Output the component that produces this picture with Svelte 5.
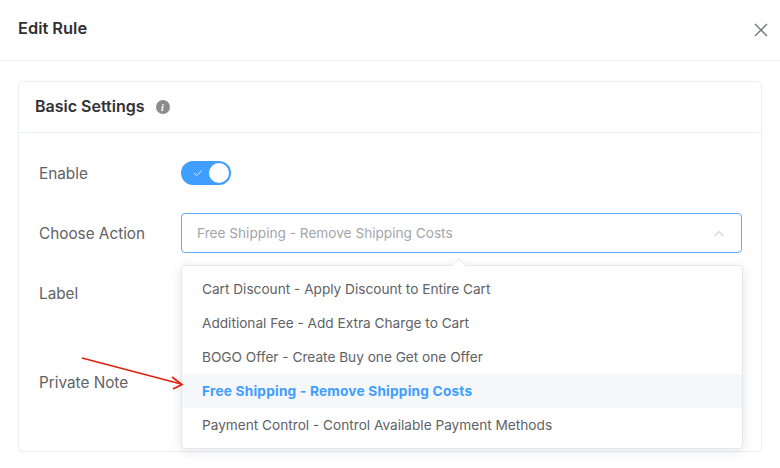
<script>
  const actions = [
    'Cart Discount - Apply Discount to Entire Cart',
    'Additional Fee - Add Extra Charge to Cart',
    'BOGO Offer - Create Buy one Get one Offer',
    'Free Shipping - Remove Shipping Costs',
    'Payment Control - Control Available Payment Methods'
  ];
  const selected = actions[3];
</script>

<div class="dialog">
  <header class="dialog-head">
    <h2>Edit Rule</h2>
    <svg class="close" width="16" height="16" viewBox="0 0 16 16" aria-label="Close">
      <path d="M2 2l12 12M14 2L2 14" stroke="#73767c" stroke-width="1.4" fill="none" />
    </svg>
  </header>

  <section class="card">
    <div class="card-head">
      <h3>Basic Settings</h3>
      <span class="info">i</span>
    </div>

    <div class="card-body">
      <div class="row">
        <span class="label">Enable</span>
        <span class="switch">
          <svg width="10" height="8" viewBox="0 0 10 8">
            <path d="M1 4.2l2.6 2.4L9 1.4" stroke="#d9ecff" stroke-width="1" fill="none" />
          </svg>
          <span class="knob"></span>
        </span>
      </div>

      <div class="row">
        <span class="label">Choose Action</span>
        <div class="select">
          <span>{selected}</span>
          <svg width="12" height="7" viewBox="0 0 12 7">
            <path d="M1.5 6L6 1.5 10.5 6" stroke="#d3d5da" stroke-width="1.2" fill="none" />
          </svg>
        </div>
      </div>

      <div class="row">
        <span class="label">Label</span>
        <div class="input"></div>
      </div>

      <div class="row note">
        <span class="label">Private Note</span>
        <div class="input textarea"></div>
      </div>

      <div class="dropdown">
        <span class="caret"></span>
        <ul>
          {#each actions as action}
            <li class:active={action === selected}>{action}</li>
          {/each}
        </ul>
      </div>
    </div>
  </section>

  <svg class="arrow" width="110" height="40" viewBox="0 0 110 40">
    <path d="M1 2L100 28" stroke="#e0220f" stroke-width="1.7" fill="none" />
    <path d="M91 21L101 28.5 92 33" stroke="#e0220f" stroke-width="1.7" fill="none" />
  </svg>
</div>

<style>
  :global(body) {
    margin: 0;
    background: #fff;
  }

  .dialog {
    position: relative;
    width: 780px;
    height: 468px;
    overflow: hidden;
    font-family: Inter, "Liberation Sans", sans-serif;
    color: #606266;
  }

  .dialog-head {
    display: flex;
    align-items: center;
    justify-content: space-between;
    height: 56px;
    padding: 0 11px 4px 18px;
    border-bottom: 1px solid #ebedf2;
  }

  h2 {
    margin: 0;
    font-size: 16.4px;
    font-weight: 600;
    color: #303133;
  }

  .close {
    margin-top: 4px;
  }

  .card {
    margin: 20px 18px 0;
    height: 371px;
    box-sizing: border-box;
    border: 1px solid #ebeef5;
    border-radius: 4px;
  }

  .card-head {
    display: flex;
    align-items: center;
    gap: 11px;
    height: 48px;
    padding: 0 16px 2px;
    border-bottom: 1px solid #ebedf5;
  }

  h3 {
    margin: 0;
    font-size: 16px;
    font-weight: 600;
    color: #303133;
  }

  .info {
    display: flex;
    align-items: center;
    justify-content: center;
    width: 14px;
    height: 14px;
    margin-top: 2px;
    border-radius: 50%;
    background: #8c8c90;
    color: #fff;
    font: italic 700 10px "Liberation Serif", serif;
  }

  .card-body {
    position: relative;
    padding: 20px 20px 0;
  }

  .row {
    display: flex;
    align-items: center;
    height: 40px;
    margin-bottom: 20px;
  }

  .row.note {
    align-items: flex-start;
    margin-top: 49px;
  }

  .label {
    width: 142px;
    flex-shrink: 0;
    padding-top: 1px;
    font-size: 15.3px;
    line-height: 40px;
    color: #606266;
  }

  .switch {
    display: flex;
    align-items: center;
    justify-content: space-between;
    box-sizing: border-box;
    width: 50px;
    height: 24px;
    padding: 0 2px 0 12px;
    border-radius: 12px;
    background: #409eff;
  }

  .knob {
    width: 20px;
    height: 20px;
    border-radius: 50%;
    background: #fff;
  }

  .select {
    display: flex;
    flex-shrink: 0;
    align-items: center;
    justify-content: space-between;
    box-sizing: border-box;
    width: 561px;
    height: 40px;
    padding: 0 16px 0 15px;
    border: 1px solid #5fabfa;
    border-radius: 4px;
    font-size: 13.65px;
    color: #a3a6ad;
  }

  .input {
    flex-shrink: 0;
    box-sizing: border-box;
    width: 561px;
    height: 40px;
    border: 1px solid #dcdfe6;
    border-radius: 4px;
  }

  .textarea {
    height: 70px;
  }

  .dropdown {
    position: absolute;
    top: 132px;
    left: 162px;
    width: 562px;
    box-sizing: border-box;
    border: 1px solid #e4e7ed;
    border-radius: 4px;
    background: #fff;
    box-shadow: 0 2px 12px rgba(0, 0, 0, 0.1);
  }

  .caret {
    position: absolute;
    top: -6px;
    left: 272px;
    width: 9px;
    height: 9px;
    background: #fff;
    border-top: 1px solid #eceef2;
    border-left: 1px solid #eceef2;
    transform: rotate(45deg);
  }

  ul {
    position: relative;
    margin: 0;
    padding: 6px 0;
    list-style: none;
  }

  li {
    height: 34px;
    padding: 0 20px;
    font-size: 13.65px;
    line-height: 34px;
    color: #606266;
  }

  li.active {
    background: #f5f7fa;
    color: #409eff;
    font-weight: 700;
    letter-spacing: 0.22px;
  }

  .arrow {
    position: absolute;
    top: 356px;
    left: 81px;
  }
</style>
